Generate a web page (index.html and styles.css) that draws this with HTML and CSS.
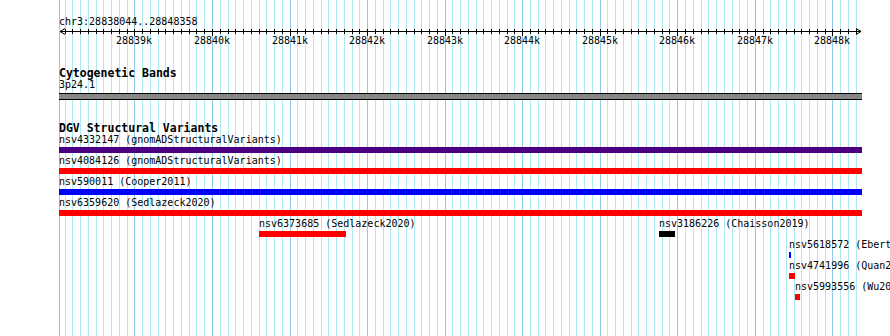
FILE: index.html
```html
<!DOCTYPE html>
<html lang="en">
<head>
    <meta charset="UTF-8">
    <meta name="viewport" content="width=device-width, initial-scale=1.0">
    <title>chr3:28838044..28848358</title>
    <link rel="stylesheet" href="styles.css">
</head>
<body>
    <div id="browser">
        <div id="gridlines"></div>

        <div class="track ruler-track">
            <div class="location">chr3:28838044..28848358</div>
            <div id="ruler">
                <svg class="ruler-axis" width="803" height="9" viewBox="0 0 803 9">
                    <path d="M1 3.5H802 M6 0.5L1 3.5L6 6.5 M797 0.5L802 3.5L797 6.5" />
                </svg>
            </div>
        </div>

        <div class="track band-track">
            <div class="track-label">Cytogenetic Bands</div>
            <div class="band-name">3p24.1</div>
            <div class="band"></div>
        </div>

        <div class="track dgv-track">
            <div class="track-label">DGV Structural Variants</div>
            <div id="dgv-rows"></div>
        </div>
    </div>

    <script src="script.js"></script>
</body>
</html>
```

FILE: styles.css
```css
html, body {
    margin: 0;
    padding: 0;
    width: 890px;
    height: 336px;
    overflow: hidden;
    background: #fff;
}

body {
    font-family: "DejaVu Sans Mono", "Liberation Mono", monospace;
    font-size: 10px;
    line-height: 12px;
    color: #000;
}

#browser {
    position: relative;
    height: 336px;
    padding-left: 59px;
}

#gridlines {
    position: absolute;
    top: 0;
    bottom: 0;
    left: 59px;
    width: 803px;
    z-index: 0;
}

.gridline {
    position: absolute;
    top: 0;
    bottom: 0;
    width: 1px;
    background: #ade9ef;
}

.gridline.major {
    background: #8ccaee;
}

.track {
    position: relative;
    z-index: 1;
    width: 803px;
}

.ruler-track {
    padding-top: 16px;
}

.location {
    white-space: nowrap;
}

#ruler {
    position: relative;
    height: 18px;
}

.ruler-axis {
    display: block;
}

.ruler-axis path {
    fill: none;
    stroke: #000;
    stroke-width: 1;
}

.tick {
    position: absolute;
    top: 1px;
    width: 1px;
    height: 5px;
    background: #000;
}

.tick.major {
    height: 7px;
}

.tick-label {
    position: absolute;
    top: 7px;
    width: 60px;
    margin-left: -30px;
    text-align: center;
}

.band-track {
    margin-top: 21px;
}

.track-label {
    font-size: 11.5px;
    font-weight: bold;
    line-height: 12px;
    white-space: nowrap;
}

.band {
    margin-top: 2px;
    height: 5px;
    background: #878787;
    border-top: 1px solid #000;
    border-bottom: 1px solid #000;
}

.dgv-track {
    margin-top: 22px;
}

.feature-row {
    position: relative;
    height: 21px;
}

.feature {
    position: absolute;
    top: 0;
}

.feature-label {
    white-space: nowrap;
    height: 12px;
}

.feature-bar {
    margin-top: 1px;
    height: 6px;
}
```

FILE: script.js
```js
const viewStart = 28838044;
const viewEnd = 28848358;
const trackWidth = 803;
const pxPerBp = 0.07754;

// x position (inside the track) of a base pair coordinate
function bpToX(bp) {
    return Math.round(153 + (bp - 28840000) * pxPerBp);
}

// Grid lines every 100bp, darker every 1kb
const gridlines = document.getElementById('gridlines');
const ruler = document.getElementById('ruler');

const edge = document.createElement('div');
edge.className = 'gridline major';
edge.style.left = '0px';
gridlines.appendChild(edge);

for (let bp = Math.ceil(viewStart / 100) * 100; bp <= viewEnd; bp += 100) {
    const x = bpToX(bp);
    const isMajor = bp % 1000 === 0;

    const line = document.createElement('div');
    line.className = isMajor ? 'gridline major' : 'gridline';
    line.style.left = `${x}px`;
    gridlines.appendChild(line);

    const tick = document.createElement('div');
    tick.className = isMajor ? 'tick major' : 'tick';
    tick.style.left = `${x}px`;
    ruler.appendChild(tick);

    if (isMajor) {
        const label = document.createElement('div');
        label.className = 'tick-label';
        label.style.left = `${x}px`;
        label.textContent = `${bp / 1000}k`;
        ruler.appendChild(label);
    }
}

// DGV features, one layout row each
const features = [
    { row: 0, name: 'nsv4332147', study: 'gnomADStructuralVariants', start: 28812310, end: 28871950, color: '#4b0082' },
    { row: 1, name: 'nsv4084126', study: 'gnomADStructuralVariants', start: 28830022, end: 28856781, color: '#ff0000' },
    { row: 2, name: 'nsv590011', study: 'Cooper2011', start: 28801466, end: 28914262, color: '#0000ff' },
    { row: 3, name: 'nsv6359620', study: 'Sedlazeck2020', start: 28836102, end: 28850012, color: '#ff0000' },
    { row: 4, name: 'nsv6373685', study: 'Sedlazeck2020', start: 28840606, end: 28841728, color: '#ff0000' },
    { row: 4, name: 'nsv3186226', study: 'Chaisson2019', start: 28845765, end: 28845971, color: '#000000' },
    { row: 5, name: 'nsv5618572', study: 'Ebert2021', start: 28847441, end: 28847467, color: '#0000ff' },
    { row: 6, name: 'nsv4741996', study: 'Quan2021', start: 28847441, end: 28847519, color: '#ff0000' },
    { row: 7, name: 'nsv5993556', study: 'Wu2021', start: 28847519, end: 28847583, color: '#ff0000' }
];

const rowsElement = document.getElementById('dgv-rows');
const rows = [];
for (let i = 0; i < 8; i++) {
    const row = document.createElement('div');
    row.className = 'feature-row';
    rowsElement.appendChild(row);
    rows.push(row);
}

features.forEach((f) => {
    const left = Math.max(0, bpToX(f.start));
    const right = Math.min(trackWidth, bpToX(f.end));

    const el = document.createElement('div');
    el.className = 'feature';
    el.style.left = `${left}px`;

    const label = document.createElement('div');
    label.className = 'feature-label';
    label.textContent = `${f.name} (${f.study})`;

    const bar = document.createElement('div');
    bar.className = 'feature-bar';
    bar.style.width = `${right - left}px`;
    bar.style.background = f.color;

    el.appendChild(label);
    el.appendChild(bar);
    rows[f.row].appendChild(el);
});
```
